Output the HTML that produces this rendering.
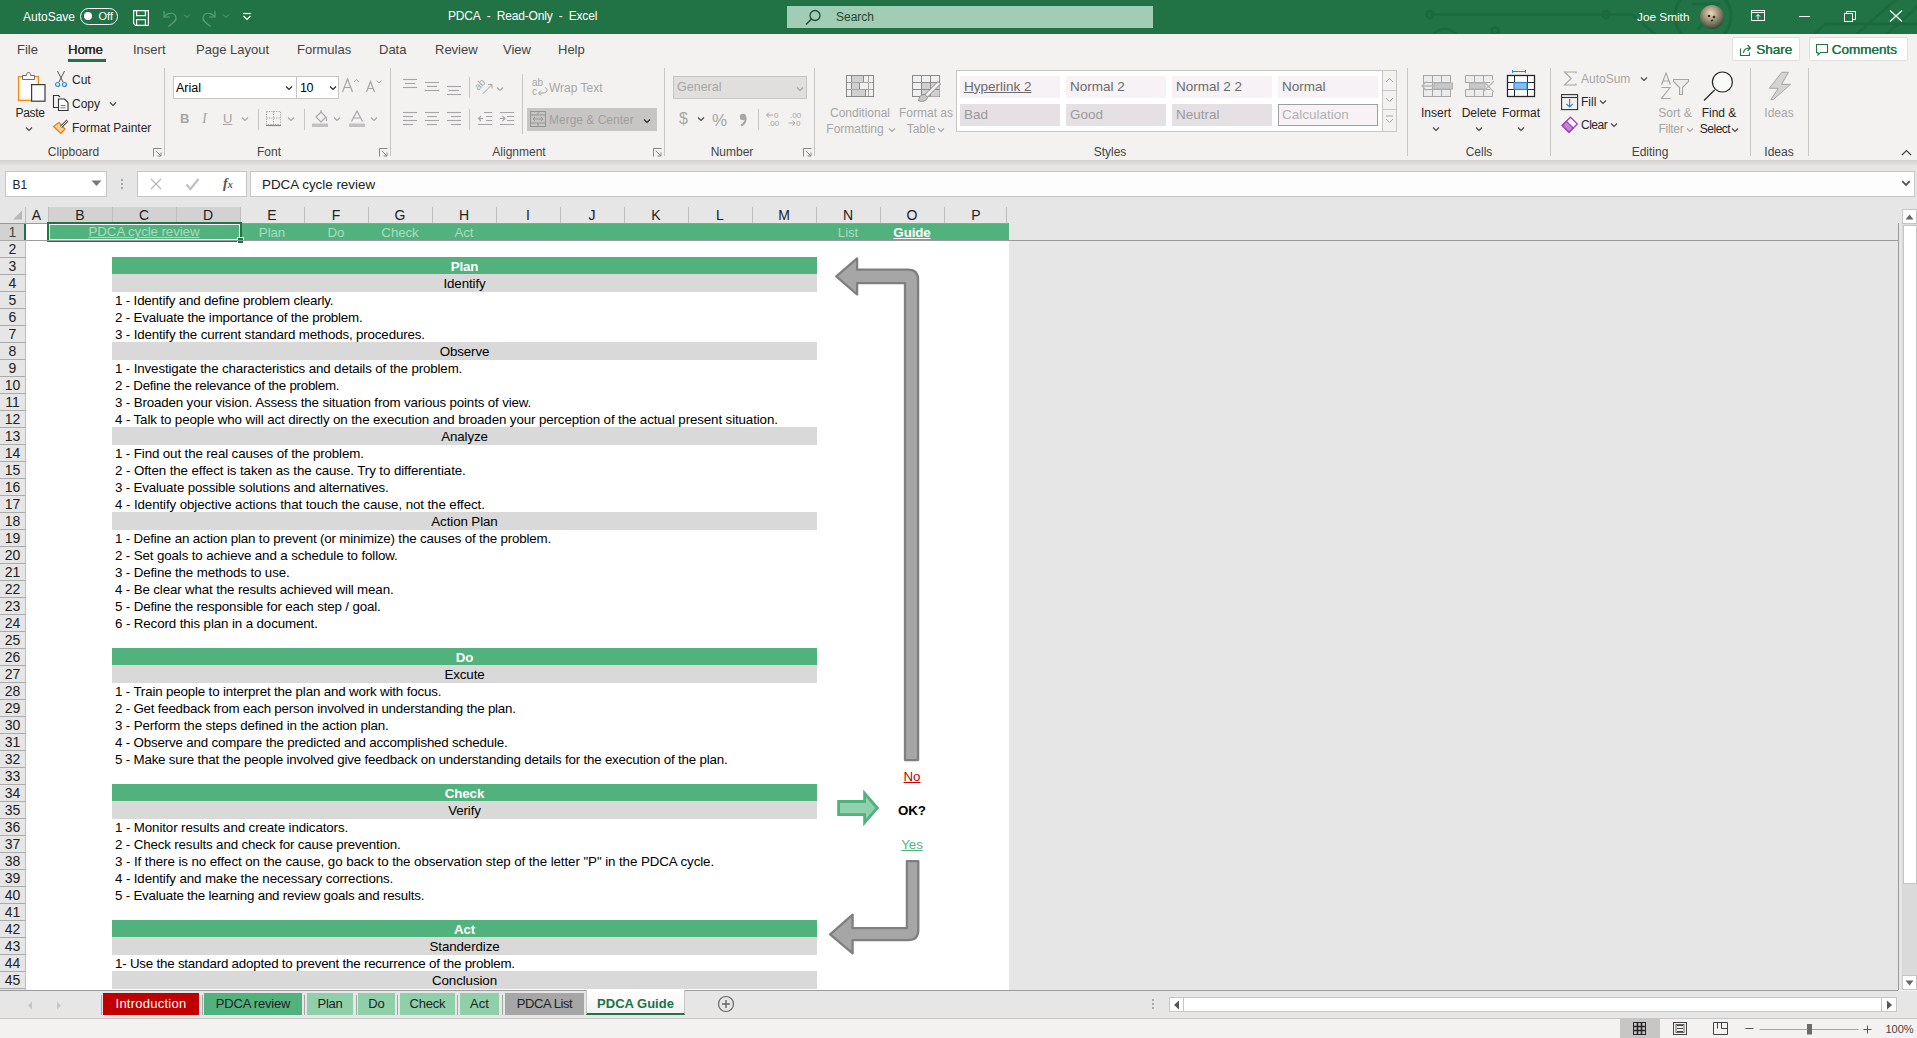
<!DOCTYPE html>
<html><head><meta charset="utf-8">
<style>
*{box-sizing:border-box}
html,body{margin:0;padding:0}
body{width:1917px;height:1038px;overflow:hidden;position:relative;background:#f3f2f1;font-family:"Liberation Sans",sans-serif;color:#262626}
.a{position:absolute}
.t{position:absolute;white-space:nowrap}
svg{overflow:visible}
</style></head><body>
<div class="a" style="left:0px;top:0px;width:1917px;height:34px;background:#217346;"></div>
<svg class="a" style="left:1400px;top:0px;" width="517" height="34" viewBox="0 0 517 34"><g stroke="#1b6a3d" stroke-width="2.6" fill="none"><path d="M30 14.5 H232 L262 40"/><circle cx="30" cy="14.5" r="3.5"/><circle cx="206" cy="14.5" r="3.5"/><circle cx="303" cy="16" r="28" stroke-width="3"/><path d="M292 4 H318 L298 30" stroke-width="3"/><circle cx="45" cy="44" r="15"/><circle cx="95" cy="31" r="3.5"/><path d="M517 24 H425 L408 40"/><path d="M500 -4 L450 40"/><path d="M525 0 L480 40"/></g></svg>
<div class="t" style="top:10.84px;font-size:12px;line-height:12px;color:#fff;left:23px;">AutoSave</div>
<div class="a" style="left:80px;top:8px;width:38px;height:17px;border:1.3px solid #fff;border-radius:9px"></div>
<div class="a" style="left:84px;top:12px;width:8px;height:8px;background:#fff;border-radius:50%"></div>
<div class="t" style="top:11.19px;font-size:11px;line-height:11px;color:#fff;left:98.5px;">Off</div>
<svg class="a" style="left:132px;top:9px;" width="18" height="18" viewBox="0 0 18 18"><g fill="none" stroke="#fff" stroke-width="1.2"><path d="M1.6 1.6 H16.4 V16.4 H3.6 L1.6 14.4 Z"/><path d="M4.6 1.6 V6.6 H13.4 V1.6"/><path d="M4.6 16.4 V10.6 H13.4 V16.4"/></g></svg>
<svg class="a" style="left:160px;top:8px;" width="20" height="20" viewBox="0 0 20 20"><path d="M4 3 V9 H10" fill="none" stroke="#5e9e7a" stroke-width="1.2"/><path d="M4.5 8.5 C8 4 15 4 16 9.5 C16.5 13 13 15 8.5 18.5" fill="none" stroke="#5e9e7a" stroke-width="1.2"/></svg>
<svg class="a" style="left:183px;top:13px;" width="8" height="6" viewBox="0 0 8 6"><path d="M1 1.5 L4 4.5 L7 1.5" fill="none" stroke="#5e9e7a" stroke-width="1"/></svg>
<svg class="a" style="left:199px;top:8px;" width="20" height="20" viewBox="0 0 20 20"><path d="M16 3 V9 H10" fill="none" stroke="#5e9e7a" stroke-width="1.2"/><path d="M15.5 8.5 C12 4 5 4 4 9.5 C3.5 13 7 15 11.5 18.5" fill="none" stroke="#5e9e7a" stroke-width="1.2"/></svg>
<svg class="a" style="left:222px;top:13px;" width="8" height="6" viewBox="0 0 8 6"><path d="M1 1.5 L4 4.5 L7 1.5" fill="none" stroke="#5e9e7a" stroke-width="1"/></svg>
<svg class="a" style="left:242px;top:12px;" width="10" height="10" viewBox="0 0 10 10"><path d="M1 1.5 H9" stroke="#fff" stroke-width="1.2"/><path d="M1.5 4 L5 7.5 L8.5 4" fill="none" stroke="#fff" stroke-width="1.2"/></svg>
<div class="t" style="top:10.34px;font-size:12px;line-height:12px;color:#fff;letter-spacing:-0.2px;left:448px;">PDCA&nbsp;&nbsp;-&nbsp;&nbsp;Read-Only&nbsp;&nbsp;-&nbsp;&nbsp;Excel</div>
<div class="a" style="left:787px;top:6px;width:366px;height:22px;background:#a0cdb3;"></div>
<svg class="a" style="left:804px;top:9px;" width="18" height="17" viewBox="0 0 18 17"><circle cx="11" cy="6.5" r="5" fill="none" stroke="#1e4d33" stroke-width="1.3"/><path d="M7.5 10 L2 15.5" stroke="#1e4d33" stroke-width="1.4"/></svg>
<div class="t" style="top:11.14px;font-size:12px;line-height:12px;color:#1d4530;left:836px;">Search</div>
<div class="t" style="top:12.01px;font-size:11.8px;line-height:11.8px;color:#fff;left:1637px;">Joe Smith</div>
<svg class="a" style="left:1699px;top:4px;" width="26" height="26" viewBox="0 0 26 26"><defs><radialGradient id="av" cx="45%" cy="35%" r="65%"><stop offset="0" stop-color="#e8dcc6"/><stop offset="0.45" stop-color="#a8977f"/><stop offset="1" stop-color="#314a33"/></radialGradient></defs><circle cx="13" cy="13" r="12" fill="url(#av)"/><circle cx="10" cy="12" r="1.3" fill="#3a2a20"/><circle cx="15" cy="13" r="1.3" fill="#3a2a20"/><path d="M12 17 L14 16" stroke="#3a2a20" stroke-width="1.5"/></svg>
<svg class="a" style="left:1751px;top:10px;" width="15" height="12" viewBox="0 0 15 12"><rect x="0.5" y="0.5" width="13" height="10" fill="none" stroke="#fff" stroke-width="1"/><path d="M0.5 2.5 H13.5" stroke="#fff" stroke-width="1"/><path d="M7 9.5 V4.5 M5 6.5 L7 4.5 L9 6.5" fill="none" stroke="#fff" stroke-width="1"/></svg>
<div class="a" style="left:1799px;top:16px;width:11px;height:1px;background:#fff;"></div>
<svg class="a" style="left:1844px;top:11px;" width="13" height="11" viewBox="0 0 13 11"><rect x="0.5" y="2.5" width="8" height="8" fill="none" stroke="#fff" stroke-width="1"/><path d="M2.5 2.5 V0.5 H11.5 V8.5 H8.5" fill="none" stroke="#fff" stroke-width="1"/></svg>
<svg class="a" style="left:1889px;top:10px;" width="14" height="12" viewBox="0 0 14 12"><path d="M1 0.5 L13 11.5 M13 0.5 L1 11.5" stroke="#fff" stroke-width="1.1"/></svg>
<div class="a" style="left:0px;top:34px;width:1917px;height:126px;background:#f3f2f1;"></div>
<div class="t" style="top:42.60px;font-size:13px;line-height:13px;color:#444;left:17px;">File</div>
<div class="t" style="top:42.60px;font-size:13px;line-height:13px;color:#262626;left:68px;text-shadow:0.3px 0 0 #262626;">Home</div>
<div class="t" style="top:42.60px;font-size:13px;line-height:13px;color:#444;left:133px;">Insert</div>
<div class="t" style="top:42.60px;font-size:13px;line-height:13px;color:#444;left:196px;">Page Layout</div>
<div class="t" style="top:42.60px;font-size:13px;line-height:13px;color:#444;left:297px;">Formulas</div>
<div class="t" style="top:42.60px;font-size:13px;line-height:13px;color:#444;left:379px;">Data</div>
<div class="t" style="top:42.60px;font-size:13px;line-height:13px;color:#444;left:435px;">Review</div>
<div class="t" style="top:42.60px;font-size:13px;line-height:13px;color:#444;left:503px;">View</div>
<div class="t" style="top:42.60px;font-size:13px;line-height:13px;color:#444;left:558px;">Help</div>
<div class="a" style="left:68px;top:59px;width:38px;height:3px;background:#217346;"></div>
<div class="a" style="left:1732px;top:37px;width:68px;height:24px;background:#fff;border:1px solid #e1dfdd;border-radius:2px"></div>
<svg class="a" style="left:1739px;top:43px;" width="14" height="14" viewBox="0 0 14 14"><path d="M1.5 5.5 V12.5 H10.5 V9.5" fill="none" stroke="#217346" stroke-width="1.1"/><path d="M4.5 10 C4.5 6.5 7 5 11 5 M8.5 2 L11.5 5 L8.5 8" fill="none" stroke="#217346" stroke-width="1.1"/></svg>
<div class="t" style="top:42.57px;font-size:13.5px;line-height:13.5px;color:#217346;left:1756px;text-shadow:0.4px 0 0 #217346;">Share</div>
<div class="a" style="left:1809px;top:37px;width:99px;height:24px;background:#fff;border:1px solid #e1dfdd;border-radius:2px"></div>
<svg class="a" style="left:1815px;top:43px;" width="14" height="14" viewBox="0 0 14 14"><path d="M1.5 1.5 H12.5 V9.5 H5.5 L3 12 V9.5 H1.5 Z" fill="none" stroke="#217346" stroke-width="1.1"/></svg>
<div class="t" style="top:42.57px;font-size:13.5px;line-height:13.5px;color:#217346;left:1831.5px;text-shadow:0.4px 0 0 #217346;">Comments</div>
<div class="a" style="left:164px;top:68px;width:1px;height:88px;background:#c8c6c4;"></div>
<div class="a" style="left:390px;top:68px;width:1px;height:88px;background:#c8c6c4;"></div>
<div class="a" style="left:664px;top:68px;width:1px;height:88px;background:#c8c6c4;"></div>
<div class="a" style="left:814px;top:68px;width:1px;height:88px;background:#c8c6c4;"></div>
<div class="a" style="left:1407px;top:68px;width:1px;height:88px;background:#c8c6c4;"></div>
<div class="a" style="left:1550px;top:68px;width:1px;height:88px;background:#c8c6c4;"></div>
<div class="a" style="left:1750px;top:68px;width:1px;height:88px;background:#c8c6c4;"></div>
<div class="a" style="left:1808px;top:68px;width:1px;height:88px;background:#c8c6c4;"></div>
<div class="t" style="top:145.84px;font-size:12px;line-height:12px;color:#444;left:-226.5px;width:600px;text-align:center;">Clipboard</div>
<div class="t" style="top:145.84px;font-size:12px;line-height:12px;color:#444;left:-31px;width:600px;text-align:center;">Font</div>
<div class="t" style="top:145.84px;font-size:12px;line-height:12px;color:#444;left:219px;width:600px;text-align:center;">Alignment</div>
<div class="t" style="top:145.84px;font-size:12px;line-height:12px;color:#444;left:432px;width:600px;text-align:center;">Number</div>
<div class="t" style="top:145.84px;font-size:12px;line-height:12px;color:#444;left:810px;width:600px;text-align:center;">Styles</div>
<div class="t" style="top:145.84px;font-size:12px;line-height:12px;color:#444;left:1179px;width:600px;text-align:center;">Cells</div>
<div class="t" style="top:145.84px;font-size:12px;line-height:12px;color:#444;left:1350px;width:600px;text-align:center;">Editing</div>
<div class="t" style="top:145.84px;font-size:12px;line-height:12px;color:#444;left:1479px;width:600px;text-align:center;">Ideas</div>
<svg class="a" style="left:153px;top:148px;" width="9" height="9" viewBox="0 0 9 9"><path d="M0.5 8.5 V0.5 H8.5" fill="none" stroke="#8a8886" stroke-width="1"/><path d="M3 3 L8 8 M4.5 8 H8 V4.5" fill="none" stroke="#8a8886" stroke-width="1"/></svg>
<svg class="a" style="left:379px;top:148px;" width="9" height="9" viewBox="0 0 9 9"><path d="M0.5 8.5 V0.5 H8.5" fill="none" stroke="#8a8886" stroke-width="1"/><path d="M3 3 L8 8 M4.5 8 H8 V4.5" fill="none" stroke="#8a8886" stroke-width="1"/></svg>
<svg class="a" style="left:653px;top:148px;" width="9" height="9" viewBox="0 0 9 9"><path d="M0.5 8.5 V0.5 H8.5" fill="none" stroke="#8a8886" stroke-width="1"/><path d="M3 3 L8 8 M4.5 8 H8 V4.5" fill="none" stroke="#8a8886" stroke-width="1"/></svg>
<svg class="a" style="left:803px;top:148px;" width="9" height="9" viewBox="0 0 9 9"><path d="M0.5 8.5 V0.5 H8.5" fill="none" stroke="#8a8886" stroke-width="1"/><path d="M3 3 L8 8 M4.5 8 H8 V4.5" fill="none" stroke="#8a8886" stroke-width="1"/></svg>
<svg class="a" style="left:1901px;top:149px;" width="11" height="7" viewBox="0 0 11 7"><path d="M1 6 L5.5 1.5 L10 6" fill="none" stroke="#444" stroke-width="1.2"/></svg>
<svg class="a" style="left:16px;top:69px;" width="32" height="34" viewBox="0 0 32 34"><rect x="2.6" y="7.6" width="19.8" height="23.8" fill="#fff" stroke="#e8891c" stroke-width="1.3"/><rect x="3.8" y="8.8" width="17.4" height="21.4" fill="none" stroke="#fde2b0" stroke-width="1.2"/><path d="M6.5 10.5 V6.5 H10.5 C10.5 4.5 11 3.5 12.5 3.5 C14 3.5 14.5 4.5 14.5 6.5 H18.5 V10.5 Z" fill="#fafafa" stroke="#6b6b6b" stroke-width="1"/><rect x="15.6" y="15.6" width="13.4" height="16.6" fill="#fafafa" stroke="#3b3b3b" stroke-width="1.2"/></svg>
<div class="t" style="top:106.84px;font-size:12px;line-height:12px;color:#262626;letter-spacing:-0.3px;left:15.5px;">Paste</div>
<svg class="a" style="left:25px;top:126px;" width="8" height="6" viewBox="0 0 8 6"><path d="M1 1.5 L4 4.5 L7 1.5" fill="none" stroke="#444" stroke-width="1.1"/></svg>
<svg class="a" style="left:54px;top:70px;" width="14" height="18" viewBox="0 0 14 18"><path d="M3.5 1 L9 12 M10.5 1 L5 12" stroke="#555" stroke-width="1"/><circle cx="3.6" cy="14.5" r="2" fill="none" stroke="#2b88d8" stroke-width="1.2"/><circle cx="10.4" cy="14.5" r="2" fill="none" stroke="#2b88d8" stroke-width="1.2"/></svg>
<div class="t" style="top:73.84px;font-size:12px;line-height:12px;color:#262626;left:72px;">Cut</div>
<svg class="a" style="left:52px;top:94px;" width="18" height="18" viewBox="0 0 18 18"><path d="M7 13.5 H1.5 V1.5 H6.5 L8 3" fill="none" stroke="#333" stroke-width="1.1"/><path d="M6.5 5 H12.5 L16 8.5 V16.5 H6.5 Z" fill="#fff" stroke="#333" stroke-width="1.1"/><path d="M8.5 11.5 H13.5 M8.5 13.8 H13.5" stroke="#555" stroke-width="0.8"/></svg>
<div class="t" style="top:97.84px;font-size:12px;line-height:12px;color:#262626;left:72px;">Copy</div>
<svg class="a" style="left:109px;top:101px;" width="8" height="6" viewBox="0 0 8 6"><path d="M1 1.5 L4 4.5 L7 1.5" fill="none" stroke="#444" stroke-width="1.1"/></svg>
<svg class="a" style="left:52px;top:118px;" width="18" height="17" viewBox="0 0 18 17"><path d="M1.5 8.5 L9 15.5 L13 11 L7 4.5 Z" fill="#fbd28b" stroke="#e07b17" stroke-width="1.2"/><path d="M9 9 L15.5 2.5" stroke="#555" stroke-width="2.6"/><path d="M9 9 L15.5 2.5" stroke="#f3f2f1" stroke-width="1"/></svg>
<div class="t" style="top:121.84px;font-size:12px;line-height:12px;color:#262626;left:72px;">Format Painter</div>
<div class="a" style="left:173px;top:76px;width:124px;height:23px;background:#fff;border:1px solid #c8c6c4"></div>
<div class="a" style="left:296px;top:76px;width:43px;height:23px;background:#fff;border:1px solid #c8c6c4"></div>
<div class="t" style="top:82.42px;font-size:12.5px;line-height:12.5px;color:#000;left:176px;">Arial</div>
<div class="t" style="top:82.42px;font-size:12.5px;line-height:12.5px;color:#000;letter-spacing:-0.5px;left:300px;">10</div>
<svg class="a" style="left:285px;top:85px;" width="8" height="6" viewBox="0 0 8 6"><path d="M1 1.5 L4 4.5 L7 1.5" fill="none" stroke="#222" stroke-width="1.1"/></svg>
<svg class="a" style="left:329px;top:85px;" width="8" height="6" viewBox="0 0 8 6"><path d="M1 1.5 L4 4.5 L7 1.5" fill="none" stroke="#222" stroke-width="1.1"/></svg>
<svg class="a" style="left:341px;top:77px;" width="20" height="16" viewBox="0 0 20 16"><path d="M1.5 15 L6.5 2 L11.5 15 M3.3 10.5 H9.7" fill="none" stroke="#a6a6a6" stroke-width="1.2"/><path d="M13 5 L15.5 2.5 L18 5" fill="none" stroke="#a6a6a6" stroke-width="1"/></svg>
<svg class="a" style="left:365px;top:79px;" width="18" height="14" viewBox="0 0 18 14"><path d="M1.5 13 L5.5 2.5 L9.5 13 M3 9.5 H8" fill="none" stroke="#a6a6a6" stroke-width="1.2"/><path d="M11.5 1.5 L14 4 L16.5 1.5" fill="none" stroke="#a6a6a6" stroke-width="1"/></svg>
<div class="t" style="top:112.00px;font-size:13px;line-height:13px;color:#a6a6a6;font-weight:bold;left:180px;">B</div>
<div class="t" style="top:110.73px;font-size:14.5px;line-height:14.5px;color:#a6a6a6;left:202px;font-style:italic;font-family:Liberation Serif;">I</div>
<div class="t" style="top:112.00px;font-size:13px;line-height:13px;color:#a6a6a6;left:223px;text-decoration:underline;">U</div>
<svg class="a" style="left:241px;top:116px;" width="8" height="6" viewBox="0 0 8 6"><path d="M1 1.5 L4 4.5 L7 1.5" fill="none" stroke="#a6a6a6" stroke-width="1.1"/></svg>
<div class="a" style="left:258px;top:109px;width:1px;height:21px;background:#c8c6c4;"></div>
<svg class="a" style="left:265px;top:110px;" width="17" height="17" viewBox="0 0 17 17"><g fill="none" stroke="#a6a6a6" stroke-width="1" stroke-dasharray="1.2 1.2"><rect x="1.5" y="1.5" width="14" height="13"/><path d="M8.5 1.5 V14.5 M1.5 8 H15.5"/></g><path d="M1 15.5 H16" stroke="#888" stroke-width="1.2"/></svg>
<svg class="a" style="left:287px;top:116px;" width="8" height="6" viewBox="0 0 8 6"><path d="M1 1.5 L4 4.5 L7 1.5" fill="none" stroke="#a6a6a6" stroke-width="1.1"/></svg>
<div class="a" style="left:304px;top:109px;width:1px;height:21px;background:#c8c6c4;"></div>
<svg class="a" style="left:311px;top:109px;" width="18" height="19" viewBox="0 0 18 19"><path d="M5 8 L10 3 L15 8 L10 13 Z" fill="none" stroke="#a6a6a6" stroke-width="1.1"/><path d="M10 3 V1 M14 8 C16 9 16 11 15 12" fill="none" stroke="#a6a6a6" stroke-width="1.1"/><rect x="1" y="14.5" width="16" height="3.5" fill="#c1c1c1"/></svg>
<svg class="a" style="left:333px;top:116px;" width="8" height="6" viewBox="0 0 8 6"><path d="M1 1.5 L4 4.5 L7 1.5" fill="none" stroke="#a6a6a6" stroke-width="1.1"/></svg>
<svg class="a" style="left:348px;top:110px;" width="18" height="18" viewBox="0 0 18 18"><path d="M3.5 11.5 L9 1 L14.5 11.5 M5.5 8 H12.5" fill="none" stroke="#a6a6a6" stroke-width="1.2"/><rect x="1" y="13.5" width="16" height="3.5" fill="#c1c1c1"/></svg>
<svg class="a" style="left:370px;top:116px;" width="8" height="6" viewBox="0 0 8 6"><path d="M1 1.5 L4 4.5 L7 1.5" fill="none" stroke="#a6a6a6" stroke-width="1.1"/></svg>
<svg class="a" style="left:403px;top:0px;height:200px" width="14" height="200" viewBox="0 0 14 200"><path d="M0.0 79.5 H14.0" stroke="#a6a6a6" stroke-width="1.1"/><path d="M2.0 83.5 H12.0" stroke="#a6a6a6" stroke-width="1.1"/><path d="M0.0 87.5 H14.0" stroke="#a6a6a6" stroke-width="1.1"/></svg>
<svg class="a" style="left:425px;top:0px;height:200px" width="14" height="200" viewBox="0 0 14 200"><path d="M0.0 82.5 H14.0" stroke="#a6a6a6" stroke-width="1.1"/><path d="M2.0 86.5 H12.0" stroke="#a6a6a6" stroke-width="1.1"/><path d="M0.0 90.5 H14.0" stroke="#a6a6a6" stroke-width="1.1"/></svg>
<svg class="a" style="left:447px;top:0px;height:200px" width="14" height="200" viewBox="0 0 14 200"><path d="M0.0 86.5 H14.0" stroke="#a6a6a6" stroke-width="1.1"/><path d="M2.0 90.5 H12.0" stroke="#a6a6a6" stroke-width="1.1"/><path d="M0.0 94.5 H14.0" stroke="#a6a6a6" stroke-width="1.1"/></svg>
<div class="a" style="left:469px;top:77px;width:1px;height:21px;background:#c8c6c4;"></div>
<svg class="a" style="left:475px;top:77px;" width="20" height="20" viewBox="0 0 20 20"><text x="0" y="10" font-size="10" fill="#a6a6a6" transform="rotate(-45 6 8)" font-family="Liberation Sans">ab</text><path d="M7.5 17 L17 7.5 M13 7.5 H17 V11.5" fill="none" stroke="#a6a6a6" stroke-width="1"/></svg>
<svg class="a" style="left:496px;top:86px;" width="8" height="6" viewBox="0 0 8 6"><path d="M1 1.5 L4 4.5 L7 1.5" fill="none" stroke="#a6a6a6" stroke-width="1.1"/></svg>
<svg class="a" style="left:403px;top:0px;height:200px" width="14" height="200" viewBox="0 0 14 200"><path d="M0 112.5 H14" stroke="#a6a6a6" stroke-width="1.1"/><path d="M0 116.5 H10" stroke="#a6a6a6" stroke-width="1.1"/><path d="M0 120.5 H14" stroke="#a6a6a6" stroke-width="1.1"/><path d="M0 124.5 H10" stroke="#a6a6a6" stroke-width="1.1"/></svg>
<svg class="a" style="left:425px;top:0px;height:200px" width="14" height="200" viewBox="0 0 14 200"><path d="M0.0 112.5 H14.0" stroke="#a6a6a6" stroke-width="1.1"/><path d="M2.0 116.5 H12.0" stroke="#a6a6a6" stroke-width="1.1"/><path d="M0.0 120.5 H14.0" stroke="#a6a6a6" stroke-width="1.1"/><path d="M2.0 124.5 H12.0" stroke="#a6a6a6" stroke-width="1.1"/></svg>
<svg class="a" style="left:447px;top:0px;height:200px" width="14" height="200" viewBox="0 0 14 200"><path d="M0 112.5 H14" stroke="#a6a6a6" stroke-width="1.1"/><path d="M4 116.5 H14" stroke="#a6a6a6" stroke-width="1.1"/><path d="M0 120.5 H14" stroke="#a6a6a6" stroke-width="1.1"/><path d="M4 124.5 H14" stroke="#a6a6a6" stroke-width="1.1"/></svg>
<div class="a" style="left:469px;top:109px;width:1px;height:21px;background:#c8c6c4;"></div>
<svg class="a" style="left:477px;top:110px;" width="16" height="16" viewBox="0 0 16 16"><path d="M7 2.5 H15 M9 6.5 H15 M9 10.5 H15 M1 14.5 H15" stroke="#a6a6a6" stroke-width="1.1"/><path d="M6 8.5 H1.5 M4 6 L1.5 8.5 L4 11" fill="none" stroke="#a6a6a6" stroke-width="1.1"/></svg>
<svg class="a" style="left:499px;top:110px;" width="16" height="16" viewBox="0 0 16 16"><path d="M1 2.5 H15 M8 6.5 H15 M8 10.5 H15 M1 14.5 H15" stroke="#a6a6a6" stroke-width="1.1"/><path d="M1 8.5 H6 M3.5 6 L6 8.5 L3.5 11" fill="none" stroke="#a6a6a6" stroke-width="1.1"/></svg>
<div class="a" style="left:522px;top:74px;width:1px;height:60px;background:#c8c6c4;"></div>
<svg class="a" style="left:530px;top:77px;" width="20" height="20" viewBox="0 0 20 20"><text x="2" y="9" font-size="10" fill="#a6a6a6" font-family="Liberation Sans">ab</text><text x="2" y="17.5" font-size="10" fill="#a6a6a6" font-family="Liberation Sans">c</text><path d="M15 10.5 C18.5 11.5 17.5 16 13 16 H9 M11 13.5 L8.5 16 L11 18.5" fill="none" stroke="#a6a6a6" stroke-width="1"/></svg>
<div class="t" style="top:81.84px;font-size:12px;line-height:12px;color:#a6a6a6;left:549px;">Wrap Text</div>
<div class="a" style="left:527px;top:108px;width:130px;height:23px;background:#c8c6c4;"></div>
<svg class="a" style="left:530px;top:111px;" width="16" height="16" viewBox="0 0 16 16"><rect x="0.5" y="0.5" width="15" height="15" fill="none" stroke="#979593" stroke-width="1"/><path d="M0.5 4 H15.5 M0.5 12 H15.5 M8 0.5 V4 M8 12 V15.5" stroke="#979593" stroke-width="1"/><path d="M3 8 H13 M5 6 L3 8 L5 10 M11 6 L13 8 L11 10" fill="none" stroke="#979593" stroke-width="1"/></svg>
<div class="t" style="top:113.84px;font-size:12px;line-height:12px;color:#a19f9d;left:549px;">Merge &amp; Center</div>
<svg class="a" style="left:643px;top:118px;" width="8" height="6" viewBox="0 0 8 6"><path d="M1 1.5 L4 4.5 L7 1.5" fill="none" stroke="#222" stroke-width="1.1"/></svg>
<div class="a" style="left:673px;top:76px;width:134px;height:23px;background:#e1dfdd;border:1px solid #c8c6c4"></div>
<div class="t" style="top:81.42px;font-size:12.5px;line-height:12.5px;color:#a6a6a6;left:677px;">General</div>
<svg class="a" style="left:796px;top:86px;" width="8" height="6" viewBox="0 0 8 6"><path d="M1 1.5 L4 4.5 L7 1.5" fill="none" stroke="#a6a6a6" stroke-width="1.1"/></svg>
<div class="t" style="top:111.46px;font-size:16px;line-height:16px;color:#a6a6a6;left:679px;">$</div>
<svg class="a" style="left:697px;top:116px;" width="8" height="6" viewBox="0 0 8 6"><path d="M1 1.5 L4 4.5 L7 1.5" fill="none" stroke="#444" stroke-width="1.1"/></svg>
<div class="t" style="top:111.61px;font-size:17px;line-height:17px;color:#a6a6a6;left:712px;">%</div>
<svg class="a" style="left:738px;top:111px;" width="10" height="16" viewBox="0 0 10 16"><circle cx="5" cy="6" r="3.2" fill="#a6a6a6"/><path d="M7.6 6.5 C8 10 6 13 3 14.5" fill="none" stroke="#a6a6a6" stroke-width="2"/></svg>
<div class="a" style="left:758px;top:109px;width:1px;height:21px;background:#c8c6c4;"></div>
<svg class="a" style="left:765px;top:110px;" width="18" height="18" viewBox="0 0 18 18"><path d="M1.5 5 H8 M4 2.5 L1.5 5 L4 7.5" fill="none" stroke="#a6a6a6" stroke-width="1"/><text x="9" y="8" font-size="8" fill="#a6a6a6" font-family="Liberation Sans">0</text><text x="3" y="16" font-size="8" fill="#a6a6a6" font-family="Liberation Sans">.00</text></svg>
<svg class="a" style="left:787px;top:110px;" width="18" height="18" viewBox="0 0 18 18"><text x="3" y="8" font-size="8" fill="#a6a6a6" font-family="Liberation Sans">.00</text><path d="M1.5 13 H8 M5.5 10.5 L8 13 L5.5 15.5" fill="none" stroke="#a6a6a6" stroke-width="1"/><text x="9" y="16" font-size="8" fill="#a6a6a6" font-family="Liberation Sans">0</text></svg>
<svg class="a" style="left:840px;top:70px;" width="110" height="35" viewBox="0 0 110 35"><rect x="6.5" y="5.5" width="27" height="21" fill="#f0f0f0" stroke="#8a8a8a" stroke-width="1"/><rect x="11.5" y="5.5" width="12" height="7" fill="#d0d0d0" stroke="#8a8a8a" stroke-width="1"/><rect x="11.5" y="12.5" width="8" height="7" fill="#d0d0d0" stroke="#8a8a8a" stroke-width="1"/><rect x="11.5" y="19.5" width="14" height="7" fill="#d0d0d0" stroke="#8a8a8a" stroke-width="1"/><path d="M28.5 5.5 V26.5 M6.5 12.5 H33.5 M6.5 19.5 H33.5" stroke="#a6a6a6" stroke-width="1"/><rect x="6.5" y="5.5" width="27" height="21" fill="none" stroke="#8a8a8a" stroke-width="1"/><rect x="72.5" y="5.5" width="27" height="21" fill="#f0f0f0" stroke="#8a8a8a" stroke-width="1"/><rect x="81.5" y="12.5" width="18" height="14" fill="#d0d0d0"/><path d="M81.5 5.5 V26.5 M90.5 5.5 V26.5 M72.5 12.5 H99.5 M72.5 19.5 H99.5" stroke="#8a8a8a" stroke-width="1"/><path d="M100.5 14 L87 27.5 L84.5 25 L98 11.5 Z" fill="#f3f2f1" stroke="#8a8a8a" stroke-width="1"/><path d="M85 24.5 C82 24 79.5 26 79 28.5 C78.5 30 80 31 78.5 30.5 C82 32.5 86.5 31 87.5 27.5 Z" fill="#c8c8c8" stroke="#8a8a8a" stroke-width="0.9"/></svg>
<div class="t" style="top:106.84px;font-size:12px;line-height:12px;color:#a6a6a6;left:560px;width:600px;text-align:center;">Conditional</div>
<div class="t" style="top:122.84px;font-size:12px;line-height:12px;color:#a6a6a6;left:555px;width:600px;text-align:center;">Formatting</div>
<svg class="a" style="left:888px;top:127px;" width="8" height="6" viewBox="0 0 8 6"><path d="M1 1.5 L4 4.5 L7 1.5" fill="none" stroke="#a6a6a6" stroke-width="1.1"/></svg>
<div class="t" style="top:106.84px;font-size:12px;line-height:12px;color:#a6a6a6;left:626px;width:600px;text-align:center;">Format as</div>
<div class="t" style="top:122.84px;font-size:12px;line-height:12px;color:#a6a6a6;left:621px;width:600px;text-align:center;">Table</div>
<svg class="a" style="left:937px;top:127px;" width="8" height="6" viewBox="0 0 8 6"><path d="M1 1.5 L4 4.5 L7 1.5" fill="none" stroke="#a6a6a6" stroke-width="1.1"/></svg>
<div class="a" style="left:956px;top:70px;width:427px;height:62px;background:#fff;border:1px solid #c8c6c4"></div>
<div class="a" style="left:960px;top:76px;width:100px;height:22px;background:#f6f2f6;"></div>
<div class="a" style="left:960px;top:104px;width:100px;height:22px;background:#e4e0e4;"></div>
<div class="t" style="top:79.57px;font-size:13.5px;line-height:13.5px;color:#6b6b6b;text-decoration:underline;left:964px;">Hyperlink 2</div>
<div class="t" style="top:107.57px;font-size:13.5px;line-height:13.5px;color:#9b9b9b;left:964px;">Bad</div>
<div class="a" style="left:1066px;top:76px;width:100px;height:22px;background:#f6f2f6;"></div>
<div class="a" style="left:1066px;top:104px;width:100px;height:22px;background:#e4e0e4;"></div>
<div class="t" style="top:79.57px;font-size:13.5px;line-height:13.5px;color:#6b6b6b;left:1070px;">Normal 2</div>
<div class="t" style="top:107.57px;font-size:13.5px;line-height:13.5px;color:#9b9b9b;left:1070px;">Good</div>
<div class="a" style="left:1172px;top:76px;width:100px;height:22px;background:#f6f2f6;"></div>
<div class="a" style="left:1172px;top:104px;width:100px;height:22px;background:#e4e0e4;"></div>
<div class="t" style="top:79.57px;font-size:13.5px;line-height:13.5px;color:#6b6b6b;left:1176px;">Normal 2 2</div>
<div class="t" style="top:107.57px;font-size:13.5px;line-height:13.5px;color:#9b9b9b;left:1176px;">Neutral</div>
<div class="a" style="left:1278px;top:76px;width:100px;height:22px;background:#f6f2f6;"></div>
<div class="a" style="left:1278px;top:104px;width:100px;height:22px;background:#f6f2f6;border:1px solid #a0a0a0"></div>
<div class="t" style="top:79.57px;font-size:13.5px;line-height:13.5px;color:#6b6b6b;left:1282px;">Normal</div>
<div class="t" style="top:107.57px;font-size:13.5px;line-height:13.5px;color:#b3b3b3;left:1282px;">Calculation</div>
<div class="a" style="left:1382px;top:70px;width:15px;height:62px;background:#f3f2f1;border:1px solid #c8c6c4"></div>
<div class="a" style="left:1382px;top:90px;width:15px;height:1px;background:#c8c6c4;"></div>
<div class="a" style="left:1382px;top:109px;width:15px;height:1px;background:#c8c6c4;"></div>
<svg class="a" style="left:1385px;top:77px;" width="9" height="6" viewBox="0 0 9 6"><path d="M1 5 L4.5 1.5 L8 5" fill="none" stroke="#a6a6a6" stroke-width="1"/></svg>
<svg class="a" style="left:1385px;top:97px;" width="9" height="6" viewBox="0 0 9 6"><path d="M1 1 L4.5 4.5 L8 1" fill="none" stroke="#a6a6a6" stroke-width="1"/></svg>
<svg class="a" style="left:1385px;top:115px;" width="9" height="9" viewBox="0 0 9 9"><path d="M1 1 H8 M1 4 L4.5 7.5 L8 4" fill="none" stroke="#a6a6a6" stroke-width="1"/></svg>
<svg class="a" style="left:1420px;top:70px;" width="120" height="32" viewBox="0 0 120 32"><g fill="none" stroke="#a6a6a6" stroke-width="1"><rect x="3.5" y="5.5" width="27" height="21" fill="#ececec"/><path d="M12.5 5.5 V26.5 M21.5 5.5 V26.5 M3.5 12.5 H30.5 M3.5 19.5 H30.5"/></g><rect x="14" y="13" width="18.5" height="6" fill="#c8c8c8" stroke="#b0b0b0" stroke-width="1"/><path d="M2 16 H14 M6.5 11.5 L2 16 L6.5 20.5" fill="none" stroke="#b8b8b8" stroke-width="1.3"/></svg>
<div class="t" style="top:106.84px;font-size:12px;line-height:12px;color:#262626;left:1136px;width:600px;text-align:center;">Insert</div>
<svg class="a" style="left:1432px;top:126px;" width="8" height="6" viewBox="0 0 8 6"><path d="M1 1.5 L4 4.5 L7 1.5" fill="none" stroke="#444" stroke-width="1.1"/></svg>
<svg class="a" style="left:1420px;top:70px;" width="120" height="32" viewBox="0 0 120 32"><g fill="none" stroke="#a6a6a6" stroke-width="1"><path d="M45.5 12.5 V5.5 H72.5 V10 M72.5 22 V26.5 H45.5 V19.5" fill="#ececec"/><path d="M54.5 5.5 V12.5 M63.5 5.5 V12.5 M54.5 19.5 V26.5 M63.5 19.5 V26.5 M45.5 12.5 H70 M45.5 19.5 H70"/></g><rect x="49.5" y="13" width="15.5" height="6" fill="#c8c8c8" stroke="#b0b0b0" stroke-width="1"/><path d="M63 11 L74 22 M74 11 L63 22" stroke="#b8b8b8" stroke-width="1.3"/></svg>
<div class="t" style="top:106.84px;font-size:12px;line-height:12px;color:#262626;left:1179px;width:600px;text-align:center;">Delete</div>
<svg class="a" style="left:1475px;top:126px;" width="8" height="6" viewBox="0 0 8 6"><path d="M1 1.5 L4 4.5 L7 1.5" fill="none" stroke="#444" stroke-width="1.1"/></svg>
<svg class="a" style="left:1420px;top:70px;" width="120" height="32" viewBox="0 0 120 32"><path d="M92.5 1.5 H105.5 M92.5 0 V3 M105.5 0 V3" stroke="#2b88d8" stroke-width="1"/><g fill="#fff" stroke="#262626" stroke-width="1"><rect x="87.5" y="5.5" width="27" height="21" stroke-width="1.3"/><path d="M94.5 5.5 V26.5 M107.5 5.5 V26.5 M87.5 12.5 H114.5 M87.5 19.5 H114.5" fill="none"/></g><rect x="94" y="12.5" width="13" height="7" fill="#8cbbe8" stroke="#2b88d8" stroke-width="1.2"/></svg>
<div class="t" style="top:106.84px;font-size:12px;line-height:12px;color:#262626;left:1221px;width:600px;text-align:center;">Format</div>
<svg class="a" style="left:1517px;top:126px;" width="8" height="6" viewBox="0 0 8 6"><path d="M1 1.5 L4 4.5 L7 1.5" fill="none" stroke="#444" stroke-width="1.1"/></svg>
<svg class="a" style="left:1560px;top:68px;" width="20" height="20" viewBox="0 0 20 20"><path d="M16 5.5 V4 H4.5 L11.2 10.5 L4.5 17 H16 V15.5" fill="none" stroke="#a6a6a6" stroke-width="1.1" stroke-linejoin="miter"/></svg>
<div class="t" style="top:72.84px;font-size:12px;line-height:12px;color:#a6a6a6;left:1581px;">AutoSum</div>
<svg class="a" style="left:1640px;top:76px;" width="8" height="6" viewBox="0 0 8 6"><path d="M1 1.5 L4 4.5 L7 1.5" fill="none" stroke="#444" stroke-width="1.1"/></svg>
<svg class="a" style="left:1561px;top:94px;" width="18" height="17" viewBox="0 0 18 17"><rect x="0.6" y="0.6" width="16" height="15" fill="none" stroke="#333" stroke-width="1.1"/><path d="M0.6 3.5 H16.6" stroke="#333" stroke-width="1.1"/><path d="M8.6 5 V13 M5.5 10 L8.6 13 L11.7 10" fill="none" stroke="#2b88d8" stroke-width="1.2"/></svg>
<div class="t" style="top:95.84px;font-size:12px;line-height:12px;color:#262626;left:1581px;">Fill</div>
<svg class="a" style="left:1599px;top:99px;" width="8" height="6" viewBox="0 0 8 6"><path d="M1 1.5 L4 4.5 L7 1.5" fill="none" stroke="#444" stroke-width="1.1"/></svg>
<svg class="a" style="left:1561px;top:115px;" width="18" height="18" viewBox="0 0 18 18"><path d="M1.2 10.5 L9.5 2.2 L16.3 9 L8 17.3 Z" fill="#fff" stroke="#a23fbf" stroke-width="1.3"/><path d="M1.2 10.5 L5.4 6.3 L12.2 13.1 L8 17.3 Z" fill="#c780db" stroke="#a23fbf" stroke-width="1.3"/></svg>
<div class="t" style="top:118.84px;font-size:12px;line-height:12px;color:#262626;letter-spacing:-0.5px;left:1581px;">Clear</div>
<svg class="a" style="left:1610px;top:122px;" width="8" height="6" viewBox="0 0 8 6"><path d="M1 1.5 L4 4.5 L7 1.5" fill="none" stroke="#444" stroke-width="1.1"/></svg>
<svg class="a" style="left:1650px;top:66px;" width="150" height="40" viewBox="0 0 150 40"><path d="M11.5 18.8 L16 7 L20.5 18.8 M13 15 H19" fill="none" stroke="#a6a6a6" stroke-width="1.1"/><path d="M11.5 21.5 H20 L11.5 32.5 H20.5" fill="none" stroke="#a6a6a6" stroke-width="1.1"/><path d="M23.5 13.5 H38.5 V15.5 L32.5 21.5 V28.5 H29.5 V21.5 L23.5 15.5 Z" fill="#ececec" stroke="#a6a6a6" stroke-width="1.1"/></svg>
<div class="t" style="top:106.84px;font-size:12px;line-height:12px;color:#a6a6a6;left:1375px;width:600px;text-align:center;">Sort &amp;</div>
<div class="t" style="top:122.84px;font-size:12px;line-height:12px;color:#a6a6a6;letter-spacing:-0.3px;left:1371px;width:600px;text-align:center;">Filter</div>
<svg class="a" style="left:1686px;top:127px;" width="8" height="6" viewBox="0 0 8 6"><path d="M1 1.5 L4 4.5 L7 1.5" fill="none" stroke="#a6a6a6" stroke-width="1.1"/></svg>
<svg class="a" style="left:1650px;top:66px;" width="150" height="40" viewBox="0 0 150 40"><circle cx="72.4" cy="16" r="10" fill="#fafafa" stroke="#262626" stroke-width="1.2"/><path d="M64.6 24 L54 34.5" stroke="#262626" stroke-width="1.2"/></svg>
<div class="t" style="top:106.84px;font-size:12px;line-height:12px;color:#262626;left:1419px;width:600px;text-align:center;">Find &amp;</div>
<div class="t" style="top:122.84px;font-size:12px;line-height:12px;color:#262626;letter-spacing:-0.5px;left:1415px;width:600px;text-align:center;">Select</div>
<svg class="a" style="left:1731px;top:127px;" width="8" height="6" viewBox="0 0 8 6"><path d="M1 1.5 L4 4.5 L7 1.5" fill="none" stroke="#444" stroke-width="1.1"/></svg>
<svg class="a" style="left:1650px;top:66px;" width="150" height="40" viewBox="0 0 150 40"><path d="M131.8 6.3 H138.5 L131.5 18.4 H140.5 L123.2 33.6 H120.9 L128.3 22.3 H119.3 Z" fill="#d4d4d4" stroke="#a6a6a6" stroke-width="1" stroke-linejoin="round"/></svg>
<div class="t" style="top:106.84px;font-size:12px;line-height:12px;color:#a6a6a6;left:1479px;width:600px;text-align:center;">Ideas</div>
<div class="a" style="left:0px;top:160px;width:1917px;height:47px;background:#e6e6e6;"></div>
<div class="a" style="left:0px;top:160px;width:1917px;height:6px;background:linear-gradient(#d2d0ce,#e6e6e6);"></div>
<div class="a" style="left:5px;top:171px;width:102px;height:26px;background:#fff;border:1px solid #c6c6c6"></div>
<div class="t" style="top:178.84px;font-size:12px;line-height:12px;color:#222;left:12.5px;">B1</div>
<svg class="a" style="left:91px;top:180px;" width="11" height="7" viewBox="0 0 11 7"><path d="M0.5 0.5 H10.5 L5.5 6 Z" fill="#777"/></svg>
<div class="a" style="left:121px;top:179px;width:2px;height:2px;background:#a6a6a6;"></div>
<div class="a" style="left:121px;top:183px;width:2px;height:2px;background:#a6a6a6;"></div>
<div class="a" style="left:121px;top:187px;width:2px;height:2px;background:#a6a6a6;"></div>
<div class="a" style="left:137px;top:171px;width:110px;height:26px;background:#fff;border:1px solid #c6c6c6"></div>
<svg class="a" style="left:149px;top:177px;" width="14" height="14" viewBox="0 0 14 14"><path d="M2 2 L12 12 M12 2 L2 12" stroke="#b8b8b8" stroke-width="1.3"/></svg>
<svg class="a" style="left:185px;top:177px;" width="15" height="14" viewBox="0 0 15 14"><path d="M1.5 7.5 L5.5 12 L13.5 2" fill="none" stroke="#c0c0c0" stroke-width="2.2"/></svg>
<div class="t" style="top:177.15px;font-size:14px;line-height:14px;color:#555;font-weight:bold;left:223px;font-family:Liberation Serif;"><i>f</i><span style="font-size:10px"><i>x</i></span></div>
<div class="a" style="left:250px;top:171px;width:1665px;height:26px;background:#fdfdfd;border:1px solid #c6c6c6"></div>
<div class="t" style="top:177.66px;font-size:13.4px;line-height:13.4px;color:#222;left:262px;">PDCA cycle review</div>
<svg class="a" style="left:1901px;top:180px;" width="10" height="7" viewBox="0 0 10 7"><path d="M1.2 1.2 L5 5 L8.8 1.2" fill="none" stroke="#555" stroke-width="1.8"/></svg>
<div class="a" style="left:0px;top:207px;width:1902px;height:16px;background:#e6e6e6;"></div>
<div class="a" style="left:1009px;top:223px;width:889px;height:767px;background:#e6e6e6;"></div>
<div class="a" style="left:26px;top:223px;width:983px;height:767px;background:#fff;"></div>
<svg class="a" style="left:13px;top:210px;" width="10" height="10" viewBox="0 0 10 10"><path d="M9 0.5 V9.5 H0 Z" fill="#b8b8b8"/></svg>
<div class="t" style="top:208.15px;font-size:14px;line-height:14px;color:#222;left:-263.5px;width:600px;text-align:center;">A</div>
<div class="a" style="left:48px;top:207px;width:64px;height:16px;background:#d2d2d2;"></div>
<div class="t" style="top:208.15px;font-size:14px;line-height:14px;color:#222;left:-220.0px;width:600px;text-align:center;">B</div>
<div class="a" style="left:112px;top:207px;width:64px;height:16px;background:#d2d2d2;"></div>
<div class="t" style="top:208.15px;font-size:14px;line-height:14px;color:#222;left:-156.0px;width:600px;text-align:center;">C</div>
<div class="a" style="left:176px;top:207px;width:64px;height:16px;background:#d2d2d2;"></div>
<div class="t" style="top:208.15px;font-size:14px;line-height:14px;color:#222;left:-92.0px;width:600px;text-align:center;">D</div>
<div class="t" style="top:208.15px;font-size:14px;line-height:14px;color:#222;left:-28.0px;width:600px;text-align:center;">E</div>
<div class="t" style="top:208.15px;font-size:14px;line-height:14px;color:#222;left:36.0px;width:600px;text-align:center;">F</div>
<div class="t" style="top:208.15px;font-size:14px;line-height:14px;color:#222;left:100.0px;width:600px;text-align:center;">G</div>
<div class="t" style="top:208.15px;font-size:14px;line-height:14px;color:#222;left:164.0px;width:600px;text-align:center;">H</div>
<div class="t" style="top:208.15px;font-size:14px;line-height:14px;color:#222;left:228.0px;width:600px;text-align:center;">I</div>
<div class="t" style="top:208.15px;font-size:14px;line-height:14px;color:#222;left:292.0px;width:600px;text-align:center;">J</div>
<div class="t" style="top:208.15px;font-size:14px;line-height:14px;color:#222;left:356.0px;width:600px;text-align:center;">K</div>
<div class="t" style="top:208.15px;font-size:14px;line-height:14px;color:#222;left:420.0px;width:600px;text-align:center;">L</div>
<div class="t" style="top:208.15px;font-size:14px;line-height:14px;color:#222;left:484.0px;width:600px;text-align:center;">M</div>
<div class="t" style="top:208.15px;font-size:14px;line-height:14px;color:#222;left:548.0px;width:600px;text-align:center;">N</div>
<div class="t" style="top:208.15px;font-size:14px;line-height:14px;color:#222;left:612.0px;width:600px;text-align:center;">O</div>
<div class="t" style="top:208.15px;font-size:14px;line-height:14px;color:#222;left:676.0px;width:600px;text-align:center;">P</div>
<div class="a" style="left:48px;top:207px;width:1px;height:16px;background:#bdbdbd;"></div>
<div class="a" style="left:112px;top:207px;width:1px;height:16px;background:#bdbdbd;"></div>
<div class="a" style="left:176px;top:207px;width:1px;height:16px;background:#bdbdbd;"></div>
<div class="a" style="left:240px;top:207px;width:1px;height:16px;background:#bdbdbd;"></div>
<div class="a" style="left:304px;top:207px;width:1px;height:16px;background:#bdbdbd;"></div>
<div class="a" style="left:368px;top:207px;width:1px;height:16px;background:#bdbdbd;"></div>
<div class="a" style="left:432px;top:207px;width:1px;height:16px;background:#bdbdbd;"></div>
<div class="a" style="left:496px;top:207px;width:1px;height:16px;background:#bdbdbd;"></div>
<div class="a" style="left:560px;top:207px;width:1px;height:16px;background:#bdbdbd;"></div>
<div class="a" style="left:624px;top:207px;width:1px;height:16px;background:#bdbdbd;"></div>
<div class="a" style="left:688px;top:207px;width:1px;height:16px;background:#bdbdbd;"></div>
<div class="a" style="left:752px;top:207px;width:1px;height:16px;background:#bdbdbd;"></div>
<div class="a" style="left:816px;top:207px;width:1px;height:16px;background:#bdbdbd;"></div>
<div class="a" style="left:880px;top:207px;width:1px;height:16px;background:#bdbdbd;"></div>
<div class="a" style="left:944px;top:207px;width:1px;height:16px;background:#bdbdbd;"></div>
<div class="a" style="left:1006px;top:207px;width:1px;height:16px;background:#bdbdbd;"></div>
<div class="a" style="left:0px;top:223px;width:1009px;height:1px;background:#9b9b9b;"></div>
<div class="a" style="left:25px;top:207px;width:1px;height:783px;background:#bdbdbd;"></div>
<div class="a" style="left:0px;top:223px;width:25px;height:17px;background:#d2d2d2;"></div>
<div class="a" style="left:0px;top:240px;width:25px;height:17px;background:#e6e6e6;"></div>
<div class="a" style="left:0px;top:257px;width:25px;height:17px;background:#e6e6e6;"></div>
<div class="a" style="left:0px;top:274px;width:25px;height:17px;background:#e6e6e6;"></div>
<div class="a" style="left:0px;top:291px;width:25px;height:17px;background:#e6e6e6;"></div>
<div class="a" style="left:0px;top:308px;width:25px;height:17px;background:#e6e6e6;"></div>
<div class="a" style="left:0px;top:325px;width:25px;height:17px;background:#e6e6e6;"></div>
<div class="a" style="left:0px;top:342px;width:25px;height:17px;background:#e6e6e6;"></div>
<div class="a" style="left:0px;top:359px;width:25px;height:17px;background:#e6e6e6;"></div>
<div class="a" style="left:0px;top:376px;width:25px;height:17px;background:#e6e6e6;"></div>
<div class="a" style="left:0px;top:393px;width:25px;height:17px;background:#e6e6e6;"></div>
<div class="a" style="left:0px;top:410px;width:25px;height:17px;background:#e6e6e6;"></div>
<div class="a" style="left:0px;top:427px;width:25px;height:17px;background:#e6e6e6;"></div>
<div class="a" style="left:0px;top:444px;width:25px;height:17px;background:#e6e6e6;"></div>
<div class="a" style="left:0px;top:461px;width:25px;height:17px;background:#e6e6e6;"></div>
<div class="a" style="left:0px;top:478px;width:25px;height:17px;background:#e6e6e6;"></div>
<div class="a" style="left:0px;top:495px;width:25px;height:17px;background:#e6e6e6;"></div>
<div class="a" style="left:0px;top:512px;width:25px;height:17px;background:#e6e6e6;"></div>
<div class="a" style="left:0px;top:529px;width:25px;height:17px;background:#e6e6e6;"></div>
<div class="a" style="left:0px;top:546px;width:25px;height:17px;background:#e6e6e6;"></div>
<div class="a" style="left:0px;top:563px;width:25px;height:17px;background:#e6e6e6;"></div>
<div class="a" style="left:0px;top:580px;width:25px;height:17px;background:#e6e6e6;"></div>
<div class="a" style="left:0px;top:597px;width:25px;height:17px;background:#e6e6e6;"></div>
<div class="a" style="left:0px;top:614px;width:25px;height:17px;background:#e6e6e6;"></div>
<div class="a" style="left:0px;top:631px;width:25px;height:17px;background:#e6e6e6;"></div>
<div class="a" style="left:0px;top:648px;width:25px;height:17px;background:#e6e6e6;"></div>
<div class="a" style="left:0px;top:665px;width:25px;height:17px;background:#e6e6e6;"></div>
<div class="a" style="left:0px;top:682px;width:25px;height:17px;background:#e6e6e6;"></div>
<div class="a" style="left:0px;top:699px;width:25px;height:17px;background:#e6e6e6;"></div>
<div class="a" style="left:0px;top:716px;width:25px;height:17px;background:#e6e6e6;"></div>
<div class="a" style="left:0px;top:733px;width:25px;height:17px;background:#e6e6e6;"></div>
<div class="a" style="left:0px;top:750px;width:25px;height:17px;background:#e6e6e6;"></div>
<div class="a" style="left:0px;top:767px;width:25px;height:17px;background:#e6e6e6;"></div>
<div class="a" style="left:0px;top:784px;width:25px;height:17px;background:#e6e6e6;"></div>
<div class="a" style="left:0px;top:801px;width:25px;height:17px;background:#e6e6e6;"></div>
<div class="a" style="left:0px;top:818px;width:25px;height:17px;background:#e6e6e6;"></div>
<div class="a" style="left:0px;top:835px;width:25px;height:17px;background:#e6e6e6;"></div>
<div class="a" style="left:0px;top:852px;width:25px;height:17px;background:#e6e6e6;"></div>
<div class="a" style="left:0px;top:869px;width:25px;height:17px;background:#e6e6e6;"></div>
<div class="a" style="left:0px;top:886px;width:25px;height:17px;background:#e6e6e6;"></div>
<div class="a" style="left:0px;top:903px;width:25px;height:17px;background:#e6e6e6;"></div>
<div class="a" style="left:0px;top:920px;width:25px;height:17px;background:#e6e6e6;"></div>
<div class="a" style="left:0px;top:937px;width:25px;height:17px;background:#e6e6e6;"></div>
<div class="a" style="left:0px;top:954px;width:25px;height:17px;background:#e6e6e6;"></div>
<div class="a" style="left:0px;top:971px;width:25px;height:17px;background:#e6e6e6;"></div>
<div class="a" style="left:0px;top:988px;width:25px;height:17px;background:#e6e6e6;"></div>
<div class="a" style="left:0px;top:240px;width:25px;height:1px;background:#ababab;"></div>
<div class="a" style="left:0px;top:257px;width:25px;height:1px;background:#ababab;"></div>
<div class="a" style="left:0px;top:274px;width:25px;height:1px;background:#ababab;"></div>
<div class="a" style="left:0px;top:291px;width:25px;height:1px;background:#ababab;"></div>
<div class="a" style="left:0px;top:308px;width:25px;height:1px;background:#ababab;"></div>
<div class="a" style="left:0px;top:325px;width:25px;height:1px;background:#ababab;"></div>
<div class="a" style="left:0px;top:342px;width:25px;height:1px;background:#ababab;"></div>
<div class="a" style="left:0px;top:359px;width:25px;height:1px;background:#ababab;"></div>
<div class="a" style="left:0px;top:376px;width:25px;height:1px;background:#ababab;"></div>
<div class="a" style="left:0px;top:393px;width:25px;height:1px;background:#ababab;"></div>
<div class="a" style="left:0px;top:410px;width:25px;height:1px;background:#ababab;"></div>
<div class="a" style="left:0px;top:427px;width:25px;height:1px;background:#ababab;"></div>
<div class="a" style="left:0px;top:444px;width:25px;height:1px;background:#ababab;"></div>
<div class="a" style="left:0px;top:461px;width:25px;height:1px;background:#ababab;"></div>
<div class="a" style="left:0px;top:478px;width:25px;height:1px;background:#ababab;"></div>
<div class="a" style="left:0px;top:495px;width:25px;height:1px;background:#ababab;"></div>
<div class="a" style="left:0px;top:512px;width:25px;height:1px;background:#ababab;"></div>
<div class="a" style="left:0px;top:529px;width:25px;height:1px;background:#ababab;"></div>
<div class="a" style="left:0px;top:546px;width:25px;height:1px;background:#ababab;"></div>
<div class="a" style="left:0px;top:563px;width:25px;height:1px;background:#ababab;"></div>
<div class="a" style="left:0px;top:580px;width:25px;height:1px;background:#ababab;"></div>
<div class="a" style="left:0px;top:597px;width:25px;height:1px;background:#ababab;"></div>
<div class="a" style="left:0px;top:614px;width:25px;height:1px;background:#ababab;"></div>
<div class="a" style="left:0px;top:631px;width:25px;height:1px;background:#ababab;"></div>
<div class="a" style="left:0px;top:648px;width:25px;height:1px;background:#ababab;"></div>
<div class="a" style="left:0px;top:665px;width:25px;height:1px;background:#ababab;"></div>
<div class="a" style="left:0px;top:682px;width:25px;height:1px;background:#ababab;"></div>
<div class="a" style="left:0px;top:699px;width:25px;height:1px;background:#ababab;"></div>
<div class="a" style="left:0px;top:716px;width:25px;height:1px;background:#ababab;"></div>
<div class="a" style="left:0px;top:733px;width:25px;height:1px;background:#ababab;"></div>
<div class="a" style="left:0px;top:750px;width:25px;height:1px;background:#ababab;"></div>
<div class="a" style="left:0px;top:767px;width:25px;height:1px;background:#ababab;"></div>
<div class="a" style="left:0px;top:784px;width:25px;height:1px;background:#ababab;"></div>
<div class="a" style="left:0px;top:801px;width:25px;height:1px;background:#ababab;"></div>
<div class="a" style="left:0px;top:818px;width:25px;height:1px;background:#ababab;"></div>
<div class="a" style="left:0px;top:835px;width:25px;height:1px;background:#ababab;"></div>
<div class="a" style="left:0px;top:852px;width:25px;height:1px;background:#ababab;"></div>
<div class="a" style="left:0px;top:869px;width:25px;height:1px;background:#ababab;"></div>
<div class="a" style="left:0px;top:886px;width:25px;height:1px;background:#ababab;"></div>
<div class="a" style="left:0px;top:903px;width:25px;height:1px;background:#ababab;"></div>
<div class="a" style="left:0px;top:920px;width:25px;height:1px;background:#ababab;"></div>
<div class="a" style="left:0px;top:937px;width:25px;height:1px;background:#ababab;"></div>
<div class="a" style="left:0px;top:954px;width:25px;height:1px;background:#ababab;"></div>
<div class="a" style="left:0px;top:971px;width:25px;height:1px;background:#ababab;"></div>
<div class="a" style="left:0px;top:988px;width:25px;height:1px;background:#ababab;"></div>
<div class="a" style="left:0px;top:1005px;width:25px;height:1px;background:#ababab;"></div>
<div class="t" style="top:225.35px;font-size:14px;line-height:14px;color:#3a4a3a;left:-287.5px;width:600px;text-align:center;">1</div>
<div class="t" style="top:242.35px;font-size:14px;line-height:14px;color:#222;left:-287.5px;width:600px;text-align:center;">2</div>
<div class="t" style="top:259.35px;font-size:14px;line-height:14px;color:#222;left:-287.5px;width:600px;text-align:center;">3</div>
<div class="t" style="top:276.35px;font-size:14px;line-height:14px;color:#222;left:-287.5px;width:600px;text-align:center;">4</div>
<div class="t" style="top:293.35px;font-size:14px;line-height:14px;color:#222;left:-287.5px;width:600px;text-align:center;">5</div>
<div class="t" style="top:310.35px;font-size:14px;line-height:14px;color:#222;left:-287.5px;width:600px;text-align:center;">6</div>
<div class="t" style="top:327.35px;font-size:14px;line-height:14px;color:#222;left:-287.5px;width:600px;text-align:center;">7</div>
<div class="t" style="top:344.35px;font-size:14px;line-height:14px;color:#222;left:-287.5px;width:600px;text-align:center;">8</div>
<div class="t" style="top:361.35px;font-size:14px;line-height:14px;color:#222;left:-287.5px;width:600px;text-align:center;">9</div>
<div class="t" style="top:378.35px;font-size:14px;line-height:14px;color:#222;left:-287.5px;width:600px;text-align:center;">10</div>
<div class="t" style="top:395.35px;font-size:14px;line-height:14px;color:#222;left:-287.5px;width:600px;text-align:center;">11</div>
<div class="t" style="top:412.35px;font-size:14px;line-height:14px;color:#222;left:-287.5px;width:600px;text-align:center;">12</div>
<div class="t" style="top:429.35px;font-size:14px;line-height:14px;color:#222;left:-287.5px;width:600px;text-align:center;">13</div>
<div class="t" style="top:446.35px;font-size:14px;line-height:14px;color:#222;left:-287.5px;width:600px;text-align:center;">14</div>
<div class="t" style="top:463.35px;font-size:14px;line-height:14px;color:#222;left:-287.5px;width:600px;text-align:center;">15</div>
<div class="t" style="top:480.35px;font-size:14px;line-height:14px;color:#222;left:-287.5px;width:600px;text-align:center;">16</div>
<div class="t" style="top:497.35px;font-size:14px;line-height:14px;color:#222;left:-287.5px;width:600px;text-align:center;">17</div>
<div class="t" style="top:514.35px;font-size:14px;line-height:14px;color:#222;left:-287.5px;width:600px;text-align:center;">18</div>
<div class="t" style="top:531.35px;font-size:14px;line-height:14px;color:#222;left:-287.5px;width:600px;text-align:center;">19</div>
<div class="t" style="top:548.35px;font-size:14px;line-height:14px;color:#222;left:-287.5px;width:600px;text-align:center;">20</div>
<div class="t" style="top:565.35px;font-size:14px;line-height:14px;color:#222;left:-287.5px;width:600px;text-align:center;">21</div>
<div class="t" style="top:582.35px;font-size:14px;line-height:14px;color:#222;left:-287.5px;width:600px;text-align:center;">22</div>
<div class="t" style="top:599.35px;font-size:14px;line-height:14px;color:#222;left:-287.5px;width:600px;text-align:center;">23</div>
<div class="t" style="top:616.35px;font-size:14px;line-height:14px;color:#222;left:-287.5px;width:600px;text-align:center;">24</div>
<div class="t" style="top:633.35px;font-size:14px;line-height:14px;color:#222;left:-287.5px;width:600px;text-align:center;">25</div>
<div class="t" style="top:650.35px;font-size:14px;line-height:14px;color:#222;left:-287.5px;width:600px;text-align:center;">26</div>
<div class="t" style="top:667.35px;font-size:14px;line-height:14px;color:#222;left:-287.5px;width:600px;text-align:center;">27</div>
<div class="t" style="top:684.35px;font-size:14px;line-height:14px;color:#222;left:-287.5px;width:600px;text-align:center;">28</div>
<div class="t" style="top:701.35px;font-size:14px;line-height:14px;color:#222;left:-287.5px;width:600px;text-align:center;">29</div>
<div class="t" style="top:718.35px;font-size:14px;line-height:14px;color:#222;left:-287.5px;width:600px;text-align:center;">30</div>
<div class="t" style="top:735.35px;font-size:14px;line-height:14px;color:#222;left:-287.5px;width:600px;text-align:center;">31</div>
<div class="t" style="top:752.35px;font-size:14px;line-height:14px;color:#222;left:-287.5px;width:600px;text-align:center;">32</div>
<div class="t" style="top:769.35px;font-size:14px;line-height:14px;color:#222;left:-287.5px;width:600px;text-align:center;">33</div>
<div class="t" style="top:786.35px;font-size:14px;line-height:14px;color:#222;left:-287.5px;width:600px;text-align:center;">34</div>
<div class="t" style="top:803.35px;font-size:14px;line-height:14px;color:#222;left:-287.5px;width:600px;text-align:center;">35</div>
<div class="t" style="top:820.35px;font-size:14px;line-height:14px;color:#222;left:-287.5px;width:600px;text-align:center;">36</div>
<div class="t" style="top:837.35px;font-size:14px;line-height:14px;color:#222;left:-287.5px;width:600px;text-align:center;">37</div>
<div class="t" style="top:854.35px;font-size:14px;line-height:14px;color:#222;left:-287.5px;width:600px;text-align:center;">38</div>
<div class="t" style="top:871.35px;font-size:14px;line-height:14px;color:#222;left:-287.5px;width:600px;text-align:center;">39</div>
<div class="t" style="top:888.35px;font-size:14px;line-height:14px;color:#222;left:-287.5px;width:600px;text-align:center;">40</div>
<div class="t" style="top:905.35px;font-size:14px;line-height:14px;color:#222;left:-287.5px;width:600px;text-align:center;">41</div>
<div class="t" style="top:922.35px;font-size:14px;line-height:14px;color:#222;left:-287.5px;width:600px;text-align:center;">42</div>
<div class="t" style="top:939.35px;font-size:14px;line-height:14px;color:#222;left:-287.5px;width:600px;text-align:center;">43</div>
<div class="t" style="top:956.35px;font-size:14px;line-height:14px;color:#222;left:-287.5px;width:600px;text-align:center;">44</div>
<div class="t" style="top:973.35px;font-size:14px;line-height:14px;color:#222;left:-287.5px;width:600px;text-align:center;">45</div>
<div class="t" style="top:990.35px;font-size:14px;line-height:14px;color:#222;left:-287.5px;width:600px;text-align:center;">46</div>
<div class="a" style="left:24px;top:223px;width:2px;height:17px;background:#217346;"></div>
<div class="a" style="left:48px;top:222px;width:192px;height:2px;background:#217346;"></div>
<div class="a" style="left:112px;top:257px;width:705px;height:18px;background:#52b27e;"></div>
<div class="t" style="top:259.72px;font-size:13.33px;line-height:13.33px;color:#fff;font-weight:bold;letter-spacing:-0.1px;left:164.5px;width:600px;text-align:center;">Plan</div>
<div class="a" style="left:112px;top:274px;width:705px;height:18px;background:#d9d9d9;"></div>
<div class="t" style="top:276.72px;font-size:13.33px;line-height:13.33px;color:#000;letter-spacing:-0.1px;left:164.5px;width:600px;text-align:center;">Identify</div>
<div class="t" style="top:293.72px;font-size:13.33px;line-height:13.33px;color:#000;letter-spacing:-0.1667px;left:115px;">1 - Identify and define problem clearly.</div>
<div class="t" style="top:310.72px;font-size:13.33px;line-height:13.33px;color:#000;letter-spacing:-0.1881px;left:115px;">2 - Evaluate the importance of the problem.</div>
<div class="t" style="top:327.72px;font-size:13.33px;line-height:13.33px;color:#000;letter-spacing:-0.1491px;left:115px;">3 - Identify the current standard methods, procedures.</div>
<div class="a" style="left:112px;top:342px;width:705px;height:18px;background:#d9d9d9;"></div>
<div class="t" style="top:344.72px;font-size:13.33px;line-height:13.33px;color:#000;letter-spacing:-0.1px;left:164.5px;width:600px;text-align:center;">Observe</div>
<div class="t" style="top:361.72px;font-size:13.33px;line-height:13.33px;color:#000;letter-spacing:-0.1339px;left:115px;">1 - Investigate the characteristics and details of the problem.</div>
<div class="t" style="top:378.72px;font-size:13.33px;line-height:13.33px;color:#000;letter-spacing:-0.2462px;left:115px;">2 - Define the relevance of the problem.</div>
<div class="t" style="top:395.72px;font-size:13.33px;line-height:13.33px;color:#000;letter-spacing:-0.1438px;left:115px;">3 - Broaden your vision. Assess the situation from various points of view.</div>
<div class="t" style="top:412.72px;font-size:13.33px;line-height:13.33px;color:#000;letter-spacing:-0.1137px;left:115px;">4 - Talk to people who will act directly on the execution and broaden your perception of the actual present situation.</div>
<div class="a" style="left:112px;top:427px;width:705px;height:18px;background:#d9d9d9;"></div>
<div class="t" style="top:429.72px;font-size:13.33px;line-height:13.33px;color:#000;letter-spacing:-0.1px;left:164.5px;width:600px;text-align:center;">Analyze</div>
<div class="t" style="top:446.72px;font-size:13.33px;line-height:13.33px;color:#000;letter-spacing:-0.1209px;left:115px;">1 - Find out the real causes of the problem.</div>
<div class="t" style="top:463.72px;font-size:13.33px;line-height:13.33px;color:#000;letter-spacing:-0.0906px;left:115px;">2 - Often the effect is taken as the cause. Try to differentiate.</div>
<div class="t" style="top:480.72px;font-size:13.33px;line-height:13.33px;color:#000;letter-spacing:-0.1646px;left:115px;">3 - Evaluate possible solutions and alternatives.</div>
<div class="t" style="top:497.72px;font-size:13.33px;line-height:13.33px;color:#000;letter-spacing:-0.094px;left:115px;">4 - Identify objective actions that touch the cause, not the effect.</div>
<div class="a" style="left:112px;top:512px;width:705px;height:18px;background:#d9d9d9;"></div>
<div class="t" style="top:514.72px;font-size:13.33px;line-height:13.33px;color:#000;letter-spacing:-0.1px;left:164.5px;width:600px;text-align:center;">Action Plan</div>
<div class="t" style="top:531.72px;font-size:13.33px;line-height:13.33px;color:#000;letter-spacing:-0.1671px;left:115px;">1 - Define an action plan to prevent (or minimize) the causes of the problem.</div>
<div class="t" style="top:548.72px;font-size:13.33px;line-height:13.33px;color:#000;letter-spacing:-0.1265px;left:115px;">2 - Set goals to achieve and a schedule to follow.</div>
<div class="t" style="top:565.72px;font-size:13.33px;line-height:13.33px;color:#000;letter-spacing:-0.1345px;left:115px;">3 - Define the methods to use.</div>
<div class="t" style="top:582.72px;font-size:13.33px;line-height:13.33px;color:#000;letter-spacing:-0.1375px;left:115px;">4 - Be clear what the results achieved will mean.</div>
<div class="t" style="top:599.72px;font-size:13.33px;line-height:13.33px;color:#000;letter-spacing:-0.1468px;left:115px;">5 - Define the responsible for each step / goal.</div>
<div class="t" style="top:616.72px;font-size:13.33px;line-height:13.33px;color:#000;letter-spacing:-0.1118px;left:115px;">6 - Record this plan in a document.</div>
<div class="a" style="left:112px;top:648px;width:705px;height:18px;background:#52b27e;"></div>
<div class="t" style="top:650.72px;font-size:13.33px;line-height:13.33px;color:#fff;font-weight:bold;letter-spacing:-0.1px;left:164.5px;width:600px;text-align:center;">Do</div>
<div class="a" style="left:112px;top:665px;width:705px;height:18px;background:#d9d9d9;"></div>
<div class="t" style="top:667.72px;font-size:13.33px;line-height:13.33px;color:#000;letter-spacing:-0.1px;left:164.5px;width:600px;text-align:center;">Excute</div>
<div class="t" style="top:684.72px;font-size:13.33px;line-height:13.33px;color:#000;letter-spacing:-0.1586px;left:115px;">1 - Train people to interpret the plan and work with focus.</div>
<div class="t" style="top:701.72px;font-size:13.33px;line-height:13.33px;color:#000;letter-spacing:-0.2162px;left:115px;">2 - Get feedback from each person involved in understanding the plan.</div>
<div class="t" style="top:718.72px;font-size:13.33px;line-height:13.33px;color:#000;letter-spacing:-0.1313px;left:115px;">3 - Perform the steps defined in the action plan.</div>
<div class="t" style="top:735.72px;font-size:13.33px;line-height:13.33px;color:#000;letter-spacing:-0.1746px;left:115px;">4 - Observe and compare the predicted and accomplished schedule.</div>
<div class="t" style="top:752.72px;font-size:13.33px;line-height:13.33px;color:#000;letter-spacing:-0.1879px;left:115px;">5 - Make sure that the people involved give feedback on understanding details for the execution of the plan.</div>
<div class="a" style="left:112px;top:784px;width:705px;height:18px;background:#52b27e;"></div>
<div class="t" style="top:786.72px;font-size:13.33px;line-height:13.33px;color:#fff;font-weight:bold;letter-spacing:-0.1px;left:164.5px;width:600px;text-align:center;">Check</div>
<div class="a" style="left:112px;top:801px;width:705px;height:18px;background:#d9d9d9;"></div>
<div class="t" style="top:803.72px;font-size:13.33px;line-height:13.33px;color:#000;letter-spacing:-0.1px;left:164.5px;width:600px;text-align:center;">Verify</div>
<div class="t" style="top:820.72px;font-size:13.33px;line-height:13.33px;color:#000;letter-spacing:-0.1122px;left:115px;">1 - Monitor results and create indicators.</div>
<div class="t" style="top:837.72px;font-size:13.33px;line-height:13.33px;color:#000;letter-spacing:-0.1438px;left:115px;">2 - Check results and check for cause prevention.</div>
<div class="t" style="top:854.72px;font-size:13.33px;line-height:13.33px;color:#000;letter-spacing:-0.0813px;left:115px;">3 - If there is no effect on the cause, go back to the observation step of the letter &quot;P&quot; in the PDCA cycle.</div>
<div class="t" style="top:871.72px;font-size:13.33px;line-height:13.33px;color:#000;letter-spacing:-0.117px;left:115px;">4 - Identify and make the necessary corrections.</div>
<div class="t" style="top:888.72px;font-size:13.33px;line-height:13.33px;color:#000;letter-spacing:-0.2111px;left:115px;">5 - Evaluate the learning and review goals and results.</div>
<div class="a" style="left:112px;top:920px;width:705px;height:18px;background:#52b27e;"></div>
<div class="t" style="top:922.72px;font-size:13.33px;line-height:13.33px;color:#fff;font-weight:bold;letter-spacing:-0.1px;left:164.5px;width:600px;text-align:center;">Act</div>
<div class="a" style="left:112px;top:937px;width:705px;height:18px;background:#d9d9d9;"></div>
<div class="t" style="top:939.72px;font-size:13.33px;line-height:13.33px;color:#000;letter-spacing:-0.1px;left:164.5px;width:600px;text-align:center;">Standerdize</div>
<div class="t" style="top:956.72px;font-size:13.33px;line-height:13.33px;color:#000;letter-spacing:-0.2074px;left:115px;">1- Use the standard adopted to prevent the recurrence of the problem.</div>
<div class="a" style="left:112px;top:971px;width:705px;height:18px;background:#d9d9d9;"></div>
<div class="t" style="top:973.72px;font-size:13.33px;line-height:13.33px;color:#000;letter-spacing:-0.1px;left:164.5px;width:600px;text-align:center;">Conclusion</div>
<div class="a" style="left:48px;top:224px;width:961px;height:16px;background:#52b27e;"></div>
<div class="a" style="left:0px;top:223px;width:1009px;height:1px;background:#9b9b9b;"></div>
<div class="t" style="top:225.02px;font-size:13.33px;line-height:13.33px;color:#a8dcbf;letter-spacing:-0.1px;text-decoration:underline;left:-156px;width:600px;text-align:center;">PDCA cycle review</div>
<div class="t" style="top:225.72px;font-size:13.33px;line-height:13.33px;color:#a8dcbf;letter-spacing:-0.1px;left:-28px;width:600px;text-align:center;">Plan</div>
<div class="t" style="top:225.72px;font-size:13.33px;line-height:13.33px;color:#a8dcbf;letter-spacing:-0.1px;left:36px;width:600px;text-align:center;">Do</div>
<div class="t" style="top:225.72px;font-size:13.33px;line-height:13.33px;color:#a8dcbf;letter-spacing:-0.1px;left:100px;width:600px;text-align:center;">Check</div>
<div class="t" style="top:225.72px;font-size:13.33px;line-height:13.33px;color:#a8dcbf;letter-spacing:-0.1px;left:164px;width:600px;text-align:center;">Act</div>
<div class="t" style="top:225.72px;font-size:13.33px;line-height:13.33px;color:#a8dcbf;letter-spacing:-0.1px;left:548px;width:600px;text-align:center;">List</div>
<div class="t" style="top:225.72px;font-size:13.33px;line-height:13.33px;color:#fff;font-weight:bold;letter-spacing:-0.1px;text-decoration:underline;left:612px;width:600px;text-align:center;">Guide</div>
<div class="a" style="left:47px;top:222px;width:195px;height:20px;border:2px solid #217346"></div>
<div class="a" style="left:49px;top:224px;width:191px;height:16px;border:1px solid #fff"></div>
<div class="a" style="left:237px;top:237px;width:7px;height:7px;background:#217346;border:1px solid #fff"></div>
<div class="a" style="left:26px;top:240px;width:1872px;height:1px;background:#9b9b9b;"></div>
<div class="a" style="left:1898px;top:223px;width:1px;height:767px;background:#9b9b9b;"></div>
<div class="t" style="top:769.72px;font-size:13.33px;line-height:13.33px;color:#c00000;letter-spacing:-0.1px;text-decoration:underline;left:612px;width:600px;text-align:center;">No</div>
<div class="t" style="top:803.72px;font-size:13.33px;line-height:13.33px;color:#000;font-weight:bold;letter-spacing:-0.1px;left:612px;width:600px;text-align:center;">OK?</div>
<div class="t" style="top:837.72px;font-size:13.33px;line-height:13.33px;color:#52b27e;letter-spacing:-0.1px;text-decoration:underline;left:612px;width:600px;text-align:center;">Yes</div>
<svg class="a" style="left:0px;top:0px;" width="1917" height="1038" viewBox="0 0 1917 1038"><path d="M836.3 276.3 L857.1 258.4 V269.7 H908 Q918.1 269.7 918.1 279.8 V760.1 H905 V283.2 H857.1 V294.5 Z" fill="#a6a6a6" stroke="#7f7f7f" stroke-width="2.3" stroke-linejoin="round"/><path d="M830.1 934.3 L852.6 914.6 V928.2 H906.9 V861.1 H918.3 V930 Q918.3 940.1 908.2 940.1 H852.6 V953.3 Z" fill="#a6a6a6" stroke="#7f7f7f" stroke-width="2.3" stroke-linejoin="round"/><path d="M838.6 801.5 H864.6 V793.2 L877.3 808 L864.6 822.6 V814.6 H838.6 Z" fill="#90d0ac" stroke="#4fb27d" stroke-width="2.8" stroke-linejoin="miter"/></svg>
<div class="a" style="left:1899px;top:207px;width:18px;height:783px;background:#e6e6e6;"></div>
<div class="a" style="left:1902px;top:209px;width:15px;height:15px;background:#fff;border:1px solid #c6c6c6"></div>
<svg class="a" style="left:1905px;top:214px;" width="9" height="6" viewBox="0 0 9 6"><path d="M0.5 5.5 L4.5 0.5 L8.5 5.5 Z" fill="#666"/></svg>
<div class="a" style="left:1902px;top:224px;width:15px;height:752px;background:#dadada;"></div>
<div class="a" style="left:1903px;top:225px;width:14px;height:659px;background:#fff;border:1px solid #c6c6c6"></div>
<div class="a" style="left:1902px;top:975px;width:15px;height:15px;background:#fff;border:1px solid #c6c6c6"></div>
<svg class="a" style="left:1905px;top:980px;" width="9" height="6" viewBox="0 0 9 6"><path d="M0.5 0.5 L4.5 5.5 L8.5 0.5 Z" fill="#666"/></svg>
<div class="a" style="left:0px;top:990px;width:1898px;height:1px;background:#9b9b9b;"></div>
<div class="a" style="left:0px;top:991px;width:1917px;height:27px;background:#e6e6e6;"></div>
<div class="a" style="left:0px;top:1018px;width:1917px;height:1px;background:#c6c6c6;"></div>
<svg class="a" style="left:26px;top:1000px;" width="8" height="11" viewBox="0 0 8 11"><path d="M6 1.5 L2 5.5 L6 9.5 Z" fill="#c6c6c6"/></svg>
<svg class="a" style="left:55px;top:1000px;" width="8" height="11" viewBox="0 0 8 11"><path d="M2 1.5 L6 5.5 L2 9.5 Z" fill="#c6c6c6"/></svg>
<div class="a" style="left:101px;top:995px;width:1px;height:20px;background:#a6a6a6;"></div>
<div class="a" style="left:202px;top:995px;width:1px;height:20px;background:#a6a6a6;"></div>
<div class="a" style="left:304px;top:995px;width:1px;height:20px;background:#a6a6a6;"></div>
<div class="a" style="left:356px;top:995px;width:1px;height:20px;background:#a6a6a6;"></div>
<div class="a" style="left:397px;top:995px;width:1px;height:20px;background:#a6a6a6;"></div>
<div class="a" style="left:457px;top:995px;width:1px;height:20px;background:#a6a6a6;"></div>
<div class="a" style="left:502px;top:995px;width:1px;height:20px;background:#a6a6a6;"></div>
<div class="a" style="left:103px;top:993px;width:96px;height:22px;background:#c00000;"></div>
<div class="t" style="top:997.00px;font-size:13px;line-height:13px;color:#fff;letter-spacing:0.25px;left:-149.0px;width:600px;text-align:center;">Introduction</div>
<div class="a" style="left:204px;top:993px;width:98px;height:22px;background:#52b27e;"></div>
<div class="t" style="top:997.00px;font-size:13px;line-height:13px;color:#222;letter-spacing:-0.2px;left:-47.0px;width:600px;text-align:center;">PDCA review</div>
<div class="a" style="left:307px;top:993px;width:46px;height:22px;background:#8fd0aa;"></div>
<div class="t" style="top:997.00px;font-size:13px;line-height:13px;color:#222;letter-spacing:-0.3px;left:30.0px;width:600px;text-align:center;">Plan</div>
<div class="a" style="left:358px;top:993px;width:37px;height:22px;background:#8fd0aa;"></div>
<div class="t" style="top:997.00px;font-size:13px;line-height:13px;color:#222;letter-spacing:0px;left:76.5px;width:600px;text-align:center;">Do</div>
<div class="a" style="left:400px;top:993px;width:55px;height:22px;background:#8fd0aa;"></div>
<div class="t" style="top:997.00px;font-size:13px;line-height:13px;color:#222;letter-spacing:-0.2px;left:127.5px;width:600px;text-align:center;">Check</div>
<div class="a" style="left:460px;top:993px;width:39px;height:22px;background:#8fd0aa;"></div>
<div class="t" style="top:997.00px;font-size:13px;line-height:13px;color:#222;letter-spacing:0px;left:179.5px;width:600px;text-align:center;">Act</div>
<div class="a" style="left:505px;top:993px;width:79px;height:22px;background:#a6a6a6;"></div>
<div class="t" style="top:997.00px;font-size:13px;line-height:13px;color:#222;letter-spacing:-0.4px;left:244.5px;width:600px;text-align:center;">PDCA List</div>
<div class="a" style="left:586px;top:990px;width:99px;height:25px;background:linear-gradient(#fff,#f2f2f2);border:1px solid #c6c6c6;border-top:none;border-bottom:2px solid #217346"></div>
<div class="t" style="top:997.00px;font-size:13px;line-height:13px;color:#217346;font-weight:bold;letter-spacing:0px;left:335.5px;width:600px;text-align:center;">PDCA Guide</div>
<svg class="a" style="left:717px;top:995px;" width="18" height="18" viewBox="0 0 18 18"><circle cx="9" cy="9" r="7.5" fill="none" stroke="#666" stroke-width="1.2"/><path d="M9 5 V13 M5 9 H13" stroke="#666" stroke-width="1.4"/></svg>
<div class="a" style="left:1152px;top:999px;width:2px;height:2px;background:#a6a6a6;"></div>
<div class="a" style="left:1152px;top:1003px;width:2px;height:2px;background:#a6a6a6;"></div>
<div class="a" style="left:1152px;top:1007px;width:2px;height:2px;background:#a6a6a6;"></div>
<div class="a" style="left:1169px;top:997px;width:728px;height:15px;background:#fff;border:1px solid #c6c6c6"></div>
<div class="a" style="left:1183px;top:997px;width:1px;height:15px;background:#c6c6c6;"></div>
<svg class="a" style="left:1172px;top:1000px;" width="9" height="10" viewBox="0 0 9 10"><path d="M7 0.5 L2 5 L7 9.5 Z" fill="#555"/></svg>
<div class="a" style="left:1881px;top:997px;width:16px;height:15px;background:#fff;border:1px solid #c6c6c6"></div>
<svg class="a" style="left:1885px;top:1000px;" width="9" height="10" viewBox="0 0 9 10"><path d="M2 0.5 L7 5 L2 9.5 Z" fill="#555"/></svg>
<div class="a" style="left:0px;top:1019px;width:1917px;height:19px;background:#f3f2f1;"></div>
<div class="a" style="left:1620px;top:1019px;width:40px;height:19px;background:#c8c6c4;"></div>
<svg class="a" style="left:1620px;top:1019px;" width="297" height="19" viewBox="0 0 297 19"><g fill="none" stroke="#262626" stroke-width="1"><rect x="13.5" y="3.5" width="12" height="12"/><path d="M17.5 3.5 V15.5 M21.5 3.5 V15.5 M13.5 7.5 H25.5 M13.5 11.5 H25.5" stroke-width="1.6"/><rect x="53.5" y="3.5" width="13" height="12" stroke="#444"/><path d="M57 6.5 H63 M57 9.5 H63 M57 12.5 H63" stroke="#444"/><rect x="56" y="5.5" width="8" height="8" stroke="#444" stroke-width="0.8"/><path d="M93.5 15.5 V3.5 H107.5 V15.5 H93.5 M97.5 3.5 V9.5 M101.5 3.5 V9.5 H107.5" stroke="#444"/><path d="M125.5 9.5 H133.5 M243.5 10.5 H251.5 M247.5 6.5 V14.5" stroke="#555"/><path d="M139.5 10.5 H238.5" stroke="#a6a6a6"/></g><rect x="187" y="5" width="5" height="10.5" fill="#6b6b6b"/></svg>
<div class="t" style="top:1023.69px;font-size:11px;line-height:11px;color:#444;left:1885.5px;">100%</div>
</body></html>
